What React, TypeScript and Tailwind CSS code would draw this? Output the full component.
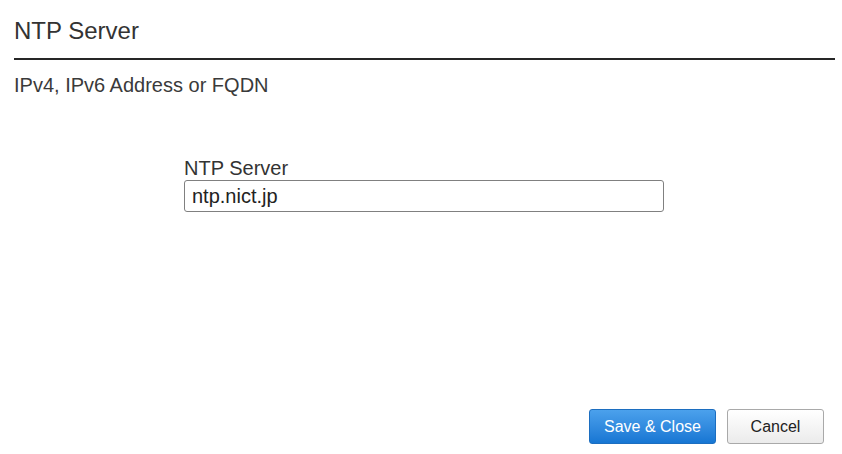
import React, { useEffect, useRef, useState } from 'react'

export default function App() {
  const [server, setServer] = useState('ntp.nict.jp')
  const inputRef = useRef<HTMLInputElement>(null)

  // focus the field with the caret after the value, as in the dialog
  useEffect(() => {
    const el = inputRef.current
    if (!el) return
    el.focus()
    el.setSelectionRange(el.value.length, el.value.length)
  }, [])

  return (
    <div className="flex h-[454px] w-[842px] flex-col bg-white font-['Liberation_Sans',Arial,sans-serif] text-[#333]">
      {/* Header */}
      <div className="pl-[14px] pr-[7px] pt-[17px]">
        <h1 className="text-[24px] leading-[28px] text-[#333]">NTP Server</h1>
        <div className="mt-[13px] h-[2px] bg-[#262626]" />
        <p className="mt-[13px] text-[20px] leading-[24px] text-[#3a3a3a]">IPv4, IPv6 Address or FQDN</p>
      </div>

      {/* Form */}
      <div className="mt-[59px] pl-[184px]">
        <label className="block text-[20px] leading-[24px] text-[#333]">NTP Server</label>
        <input
          ref={inputRef}
          value={server}
          onChange={(e) => setServer(e.target.value)}
          className="block h-[32px] w-[480px] rounded-[3px] border border-[#808080] bg-white px-[7px] text-[20px] text-[#222] caret-black outline-none"
        />
      </div>

      <div className="flex-1" />

      {/* Actions */}
      <div className="flex justify-end gap-[11px] pb-[10px] pr-[18px]">
        <button className="h-[35px] w-[127px] rounded-[3px] border border-[#1c6ec0] bg-gradient-to-b from-[#4ba1ec] to-[#1676d3] text-[16px] text-white">
          Save &amp; Close
        </button>
        <button className="h-[35px] w-[97px] rounded-[3px] border border-[#a9a9a9] bg-gradient-to-b from-white to-[#ebebeb] text-[16px] text-[#222]">
          Cancel
        </button>
      </div>
    </div>
  )
}
